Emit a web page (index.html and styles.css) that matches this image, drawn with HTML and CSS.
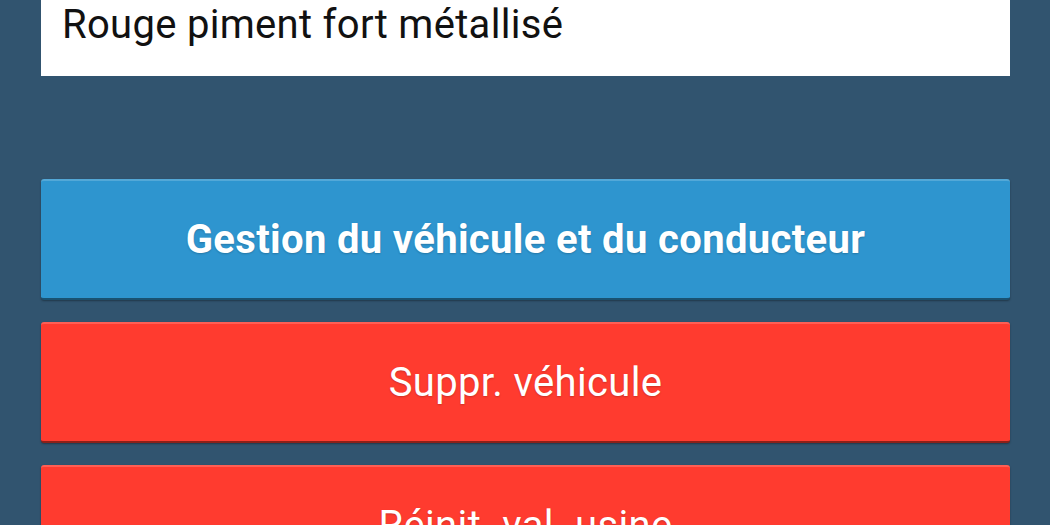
FILE: index.html
```html
<!DOCTYPE html>
<html lang="fr">
<head>
<meta charset="utf-8">
<link rel="stylesheet" href="styles.css">
</head>
<body>
<div class="page">
  <div class="field">Rouge piment fort métallisé</div>
  <div class="actions">
    <div class="btn btn-blue">Gestion du véhicule et du conducteur</div>
    <div class="btn btn-red btn-regular">Suppr. véhicule</div>
    <div class="btn btn-red btn-regular">Réinit. val. usine</div>
  </div>
</div>
</body>
</html>
```
FILE: styles.css
```css
html, body {
  margin: 0;
  padding: 0;
  background: #31546f;
  overflow: hidden;
  height: 525px;
}
.page {
  padding: 0 40px 0 41px;
  font-family: Roboto, "Noto Sans", sans-serif;
}
.field {
  background: #ffffff;
  height: 76px;
  box-sizing: border-box;
  padding: 2px 21px 0;
  font-size: 40px;
  letter-spacing: 0.3px;
  line-height: 46px;
  color: #111;
}
.actions {
  display: flex;
  flex-direction: column;
  gap: 22px;
  margin-top: 103px;
}
.btn {
  height: 121px;
  box-sizing: border-box;
  border-radius: 3px;
  border-top: 2px solid rgba(255,255,255,0.18);
  border-bottom: 2px solid rgba(0,0,0,0.45);
  display: flex;
  align-items: center;
  justify-content: center;
  color: #ffffff;
  font-size: 40px;
  letter-spacing: 0.35px;
  font-weight: 700;
  text-shadow: 0 1px 2px rgba(0,0,0,0.2);
  box-shadow: 0 1px 2px rgba(0,0,0,0.35);
}
.btn-blue { background: #2e95cf; }
.btn-red { background: #ff3b2f; }
.btn-regular { font-weight: 400; }
```
